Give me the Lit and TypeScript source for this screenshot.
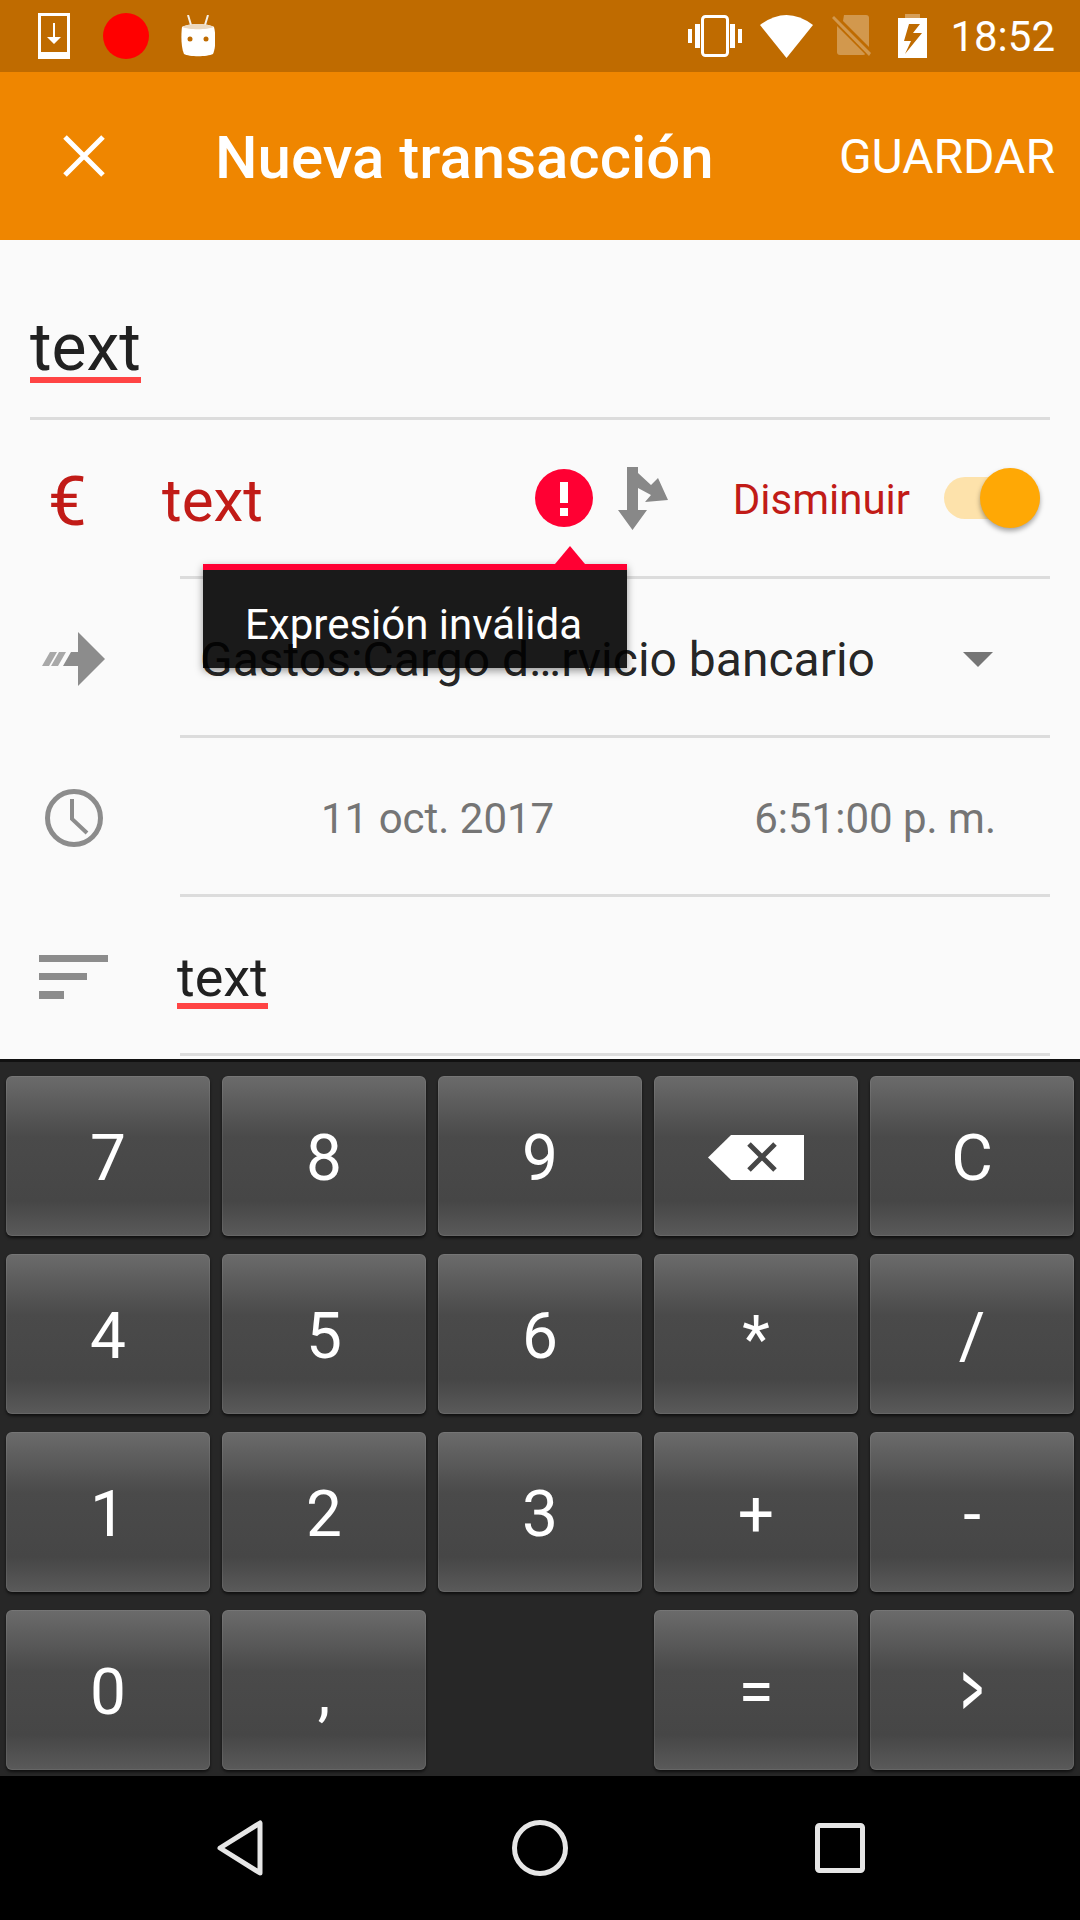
import { LitElement, html, css } from "lit"
import { customElement } from "lit/decorators.js"

const KEYS = ["7", "8", "9", "del", "C", "4", "5", "6", "*", "/", "1", "2", "3", "+", "-", "0", ",", "", "=", ">"]

@customElement("app-root")
export class AppRoot extends LitElement {
  static styles = css`
    :host {
      display: block;
      width: 1080px;
      height: 1920px;
      position: relative;
      overflow: hidden;
      background: #fafafa;
      font-family: Roboto, "Noto Sans", sans-serif;
      color: #212121;
    }
    svg { display: block; flex: none; }

    .status {
      height: 72px;
      background: #bf6b00;
      display: flex;
      align-items: center;
      color: #fff;
      padding: 0 25px 0 38px;
    }
    .status .rec { width: 46px; height: 46px; border-radius: 50%; background: #ff0000; margin-left: 33px; }
    .status .droid { margin-left: 32px; }
    .status .spacer { flex: 1; }
    .status .vib { margin-right: 18px; }
    .status .wifi { margin-right: 19px; }
    .status .sim { margin-right: 27px; }
    .status .time { font-size: 42px; margin: 2px 0 0 23px; line-height: 72px; }

    .toolbar {
      height: 168px;
      background: #ef8600;
      display: flex;
      align-items: center;
      color: #fff;
      padding: 0 25px 0 63px;
    }
    .toolbar h1 { margin: 2px 0 0 110px; font-size: 60px; font-weight: 500; flex: 1; }
    .toolbar .save { font-size: 48px; }

    .title {
      height: 180px;
      margin: 0 30px;
      border-bottom: 3px solid #dcdcdc;
      box-sizing: border-box;
      display: flex;
      align-items: flex-start;
      padding-top: 75px;
    }
    .field {
      display: inline-block;
      border-bottom: 6px solid #ff4444;
      line-height: 1;
    }
    .title .field { font-size: 66px; height: 62px; }

    .row { height: 159px; display: flex; box-sizing: border-box; }
    .row .lead { width: 180px; flex: none; display: flex; align-items: center; }
    .row .body {
      flex: 1;
      margin-right: 30px;
      border-bottom: 3px solid #dcdcdc;
      box-sizing: border-box;
      display: flex;
      align-items: center;
      position: relative;
    }
    .amount { height: 159px; display: flex; align-items: center; margin-right: 30px; padding-left: 48px; color: #c11b17; }
    .amount .euro { font-size: 69px; width: 114px; margin-top: 3px; }
    .amount .value { font-size: 60px; flex: 1; margin-top: 2px; }
    .amount .err { margin: 0 25px 3px 0; }
    .amount .split { margin: 0 65px 2px 0; }
    .amount .kind { font-size: 42px; margin-right: 34px; }
    .switch { width: 96px; height: 60px; position: relative; margin: 0 10px 3px 0; }
    .switch .track { position: absolute; left: 0; right: 0; top: 9px; height: 42px; border-radius: 21px; background: #fde2ab; }
    .switch .knob {
      position: absolute; right: 0; top: 0; width: 60px; height: 60px; border-radius: 50%;
      background: #ffa805; box-shadow: 0 3px 5px rgba(0, 0, 0, 0.35);
    }
    .hr { height: 3px; background: #dcdcdc; margin: -3px 30px 0 180px; }

    .account { font-size: 48px; padding: 4px 0 0 20px; position: relative; z-index: 3; color: rgba(0, 0, 0, 0.87); }
    .account + svg { position: absolute; right: 57px; top: 73px; }
    .date, .clock { color: #757575; font-size: 42px; margin-top: 4px; }
    .date { margin-left: 141px; }
    .clock { margin-left: 200px; }
    .row .notes { padding-top: 10px; }
    .notes .field { font-size: 54px; margin-left: -3px; height: 52px; }

    .tip {
      position: absolute;
      left: 203px;
      top: 564px;
      width: 424px;
      height: 104px;
      box-sizing: border-box;
      background: #1a1a1a;
      border-top: 6px solid #ff0033;
      box-shadow: 0 3px 8px rgba(0, 0, 0, 0.4);
      color: #fff;
      font-size: 42px;
      padding: 34px 0 0 42px;
      line-height: 1;
      z-index: 2;
    }
    .tip::before {
      content: "";
      position: absolute;
      left: 352px;
      top: -24px;
      border: 15px solid transparent;
      border-top: 0;
      border-bottom: 18px solid #ff0033;
    }

    .keys {
      position: absolute;
      left: 0;
      right: 0;
      top: 1059px;
      height: 717px;
      box-sizing: border-box;
      background: #272727;
      border-top: 3px solid #111;
      padding: 14px 6px 6px;
      display: grid;
      grid-template-columns: repeat(5, 204px);
      grid-auto-rows: 160px;
      gap: 18px 12px;
    }
    .key {
      border-radius: 6px;
      background: linear-gradient(#6b6b6b 0%, #4a4a4a 38%, #464646 78%, #5a5a5a 100%);
      box-shadow: 0 2px 3px rgba(0, 0, 0, 0.6), inset 0 0 0 1px rgba(255, 255, 255, 0.08);
      color: #fff;
      font-size: 64px;
      display: flex;
      align-items: center;
      justify-content: center;
      line-height: 1;
      padding-top: 6px;
      box-sizing: border-box;
    }
    .key.blank { background: none; box-shadow: none; }
    .key svg { margin-top: -3px; }
    .key .star { margin-top: 6px; }
    .key .next { margin-top: -8px; font-size: 84px; transform: scaleX(0.52); }

    .nav {
      position: absolute;
      left: 0;
      right: 0;
      bottom: 0;
      height: 144px;
      background: #000;
      display: flex;
      align-items: center;
      padding-left: 217px;
    }
    .nav .home { margin-left: 249px; }
    .nav .recent { margin-left: 247px; }
  `

  private downloadIcon() {
    return html`<svg width="32" height="46" viewBox="0 0 32 46">
      <path fill="#fff" fill-rule="evenodd" d="M0 0H32V46H0ZM3 3V39H29V3Z"/>
      <path fill="#fff" d="M15 10h2v14h6l-7 7-7-7h6z"/>
    </svg>`
  }

  private droidIcon() {
    return html`<svg class="droid" width="34" height="42" viewBox="0 0 34 42">
      <path fill="none" stroke="#f5f0e8" stroke-width="2" d="M7 0l3 10M27 0l-3 10"/>
      <path fill="#fff" d="M1 12C8 8 26 8 33 12C35 20 35 32 32 39C26 42 8 42 3 39C0 32 0 20 1 12Z"/>
      <path fill="#ecd9c0" d="M1 12C8 8 26 8 33 12C26 15 8 15 1 12Z"/>
      <circle cx="9" cy="24" r="2.5" fill="#bf6b00"/>
      <circle cx="25" cy="24" r="2.5" fill="#bf6b00"/>
    </svg>`
  }

  private statusRight() {
    return html`
      <svg class="vib" width="54" height="42" viewBox="0 0 54 42">
        <path fill="#fff" d="M0 14h4v14H0zM7 9h5v24H7zM42 9h5v24h-5zM50 14h4v14h-4z"/>
        <rect x="14.5" y="1.5" width="25" height="39" rx="3" fill="none" stroke="#fff" stroke-width="3"/>
      </svg>
      <svg class="wifi" width="53" height="43" viewBox="0 0 53 43">
        <path fill="#fff" d="M0 10Q26.500 -10 53 10L26.500 43Z"/>
      </svg>
      <svg class="sim" width="39" height="42" viewBox="0 0 39 42">
        <g fill="#fff" opacity="0.3">
          <path d="M12 0H34a3 3 0 0 1 3 3V32L11 6Z"/>
          <path d="M5 11L33 39Q33 40 31 40H8a3 3 0 0 1-3-3Z"/>
          <path d="M0 3L2 1L39 38L37 41Z"/>
        </g>
      </svg>
      <svg width="29" height="44" viewBox="0 0 29 44">
        <path fill="#fff" opacity="0.35" d="M7 0H22V4H7Z"/>
        <path fill="#fff" fill-rule="evenodd" d="M0 4H29V44H0ZM11 10L6 27H13L7 40L24 19H15L22 10Z"/>
      </svg>
      <span class="time">18:52</span>
    `
  }

  private key(k: string) {
    if (k === "") return html`<div class="key blank"></div>`
    if (k === "del") {
      return html`<div class="key">
        <svg width="96" height="46" viewBox="0 0 96 46">
          <path fill="#fff" d="M23 0H96V45H23L0 22.500Z"/>
          <path fill="none" stroke="#464646" stroke-width="5" d="M41 9L67 35M67 9L41 35"/>
        </svg>
      </div>`
    }
    if (k === "*") return html`<div class="key"><span class="star">*</span></div>`
    if (k === ">") return html`<div class="key"><span class="next">&gt;</span></div>`
    return html`<div class="key">${k}</div>`
  }

  render() {
    return html`
      <div class="status">
        ${this.downloadIcon()}
        <div class="rec"></div>
        ${this.droidIcon()}
        <div class="spacer"></div>
        ${this.statusRight()}
      </div>
      <div class="toolbar">
        <svg width="42" height="42" viewBox="0 0 42 42">
          <path stroke="#fff" stroke-width="5" d="M2 2L40 40M40 2L2 40"/>
        </svg>
        <h1>Nueva transacción</h1>
        <span class="save">GUARDAR</span>
      </div>

      <div class="title"><span class="field">text</span></div>

      <div class="amount">
        <span class="euro">€</span>
        <span class="value">text</span>
        <svg class="err" width="58" height="58" viewBox="0 0 58 58">
          <circle cx="29" cy="29" r="29" fill="#ff0033"/>
          <path fill="#fff" d="M25 13h8v21h-8zM25 39h8v8h-8z"/>
        </svg>
        <svg class="split" width="50" height="63" viewBox="0 0 50 63">
          <path fill="#888" d="M9 0H20V6L33 18L40 11L50 33L27 35L33 28L20 21V43H29L14.500 63L0 43H9Z"/>
        </svg>
        <span class="kind">Disminuir</span>
        <div class="switch"><div class="track"></div><div class="knob"></div></div>
      </div>
      <div class="hr"></div>

      <div class="tip">Expresión inválida</div>

      <div class="row">
        <div class="lead">
          <svg style="margin-left:42px" width="63" height="54" viewBox="0 0 63 54">
            <path fill="#8c8c8c" d="M36 0L63 27L36 54V34H21L29 20H36Z"/>
            <path fill="#a8a8a8" d="M8 20H15L7 34H0ZM17 20H24L16 34H9Z"/>
          </svg>
        </div>
        <div class="body">
          <span class="account">Gastos:Cargo d…rvicio bancario</span>
          <svg width="30" height="15" viewBox="0 0 30 15"><path fill="#757575" d="M0 0H30L15 15Z"/></svg>
        </div>
      </div>

      <div class="row">
        <div class="lead">
          <svg style="margin-left:45px" width="58" height="58" viewBox="0 0 58 58">
            <circle cx="29" cy="29" r="26.500" fill="none" stroke="#8c8c8c" stroke-width="5"/>
            <path fill="none" stroke="#8c8c8c" stroke-width="4" d="M27 10V30L42 44"/>
          </svg>
        </div>
        <div class="body">
          <span class="date">11 oct. 2017</span>
          <span class="clock">6:51:00 p. m.</span>
        </div>
      </div>

      <div class="row">
        <div class="lead">
          <svg style="margin-left:39px" width="69" height="44" viewBox="0 0 69 44">
            <path fill="#8c8c8c" d="M0 0H69V7H0ZM0 18H48V25H0ZM0 36H25V44H0Z"/>
          </svg>
        </div>
        <div class="body notes"><span class="field">text</span></div>
      </div>

      <div class="keys">${KEYS.map((k) => this.key(k))}</div>

      <div class="nav">
        <svg width="46" height="56" viewBox="0 0 46 56">
          <path fill="none" stroke="#e6e6e6" stroke-width="5" stroke-linejoin="round" d="M43 3V53L3 28Z"/>
        </svg>
        <svg class="home" width="56" height="56" viewBox="0 0 56 56">
          <circle cx="28" cy="28" r="25.500" fill="none" stroke="#e6e6e6" stroke-width="5"/>
        </svg>
        <svg class="recent" width="50" height="50" viewBox="0 0 50 50">
          <rect x="2.500" y="2.500" width="45" height="45" rx="2" fill="none" stroke="#e6e6e6" stroke-width="5"/>
        </svg>
      </div>
    `
  }
}
